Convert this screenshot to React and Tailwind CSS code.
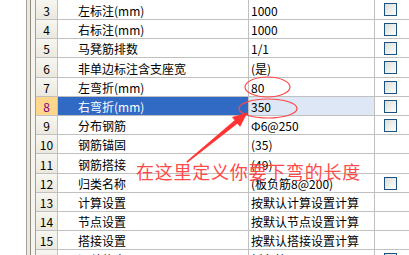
import React from "react";

const rows = [
  { no: 3, name: "左标注(mm)", value: "1000", check: true, tall: true },
  { no: 4, name: "右标注(mm)", value: "1000", check: true },
  { no: 5, name: "马凳筋排数", value: "1/1", check: true },
  { no: 6, name: "非单边标注含支座宽", value: "(是)", check: true, tall: true },
  { no: 7, name: "左弯折(mm)", value: "80", check: true },
  { no: 8, name: "右弯折(mm)", value: "350", check: true, selected: true },
  { no: 9, name: "分布钢筋", value: "Φ6@250", check: true },
  { no: 10, name: "钢筋锚固", value: "(35)" },
  { no: 11, name: "钢筋搭接", value: "(49)", tall: true },
  { no: 12, name: "归类名称", value: "(板负筋8@200)", check: true },
  { no: 13, name: "计算设置", value: "按默认计算设置计算" },
  { no: 14, name: "节点设置", value: "按默认节点设置计算" },
  { no: 15, name: "搭接设置", value: "按默认搭接设置计算" },
  { no: 16, name: "汇总信息", value: "板负筋", check: true },
];

function Checkbox() {
  return (
    <div className="w-[13px] h-[13px] border border-[#1c5180] bg-gradient-to-br from-[#dcdcd7] to-white" />
  );
}

function Row({ row }) {
  return (
    <div
      className={
        "flex shrink-0 border-b border-[#c0c0c0] " + (row.tall ? "h-[20px]" : "h-[19px]")
      }
    >
      <div
        className={
          "w-[22px] shrink-0 flex items-center justify-center pt-[2px] border-r border-[#c0c0c0] " +
          (row.selected
            ? "bg-[#ffd78c] text-[#800080]"
            : "bg-gradient-to-b from-[#f7f6f0] to-[#ebe9de] text-black")
        }
      >
        {row.no}
      </div>
      <div
        className={
          "w-[191px] shrink-0 flex items-center pl-[20px] pt-[2px] border-r border-[#c0c0c0] " +
          (row.selected ? "bg-[#316ac5] text-white" : "bg-white text-black")
        }
      >
        {row.name}
      </div>
      <div
        className={
          "w-[126px] shrink-0 flex items-center pl-[2px] pt-[2px] border-r border-[#c0c0c0] " +
          (row.selected ? "bg-[#dde7f5]" : "bg-white")
        }
      >
        {row.value}
      </div>
      <div className="flex-1 flex items-center pl-[9px] bg-white">
        {row.check && <Checkbox />}
      </div>
    </div>
  );
}

export default function App() {
  return (
    <div
      className="relative w-[409px] h-[255px] overflow-hidden bg-white flex text-[12px] leading-none text-black"
      style={{ fontFamily: '"Noto Sans CJK SC", "Liberation Sans", sans-serif' }}
    >
      {/* left frame strips */}
      <div className="w-[26px] shrink-0 bg-white" />
      <div className="w-[1px] shrink-0 bg-[#a0a0a0]" />
      <div className="w-[3px] shrink-0 bg-[#ece9d8]" />
      <div className="w-[1px] shrink-0 bg-[#8e8c80]" />
      <div className="w-[4px] shrink-0 bg-[#f5f4ee]" />
      <div className="w-[1px] shrink-0 bg-[#a0a0a0]" />

      <div className="flex-1 flex flex-col">
        {rows.map((r) => (
          <Row key={r.no} row={r} />
        ))}
      </div>

      {/* annotation */}
      <svg
        className="absolute left-0 top-0 pointer-events-none"
        width="409"
        height="255"
        viewBox="0 0 409 255"
      >
        <ellipse cx="267.5" cy="87" rx="22.5" ry="10" fill="none" stroke="#ff4848" strokeWidth="1.2" />
        <ellipse cx="268" cy="108.5" rx="29" ry="9.5" fill="none" stroke="#ff4848" strokeWidth="1.2" />
        <polygon
          points="187.3,162.4 237.5,123.3 240,126.4 247,113 232.4,117.2 234.9,120.3 186.7,161.6"
          fill="#ff3333"
          stroke="#ff3333"
          strokeWidth="0.6"
          strokeLinejoin="round"
        />
      </svg>
      <span className="absolute left-[136px] top-[162px] text-[18px] leading-none tracking-[0.75px] text-[#ff4a4a] whitespace-nowrap">
        在这里定义你要下弯的长度
      </span>
    </div>
  );
}
